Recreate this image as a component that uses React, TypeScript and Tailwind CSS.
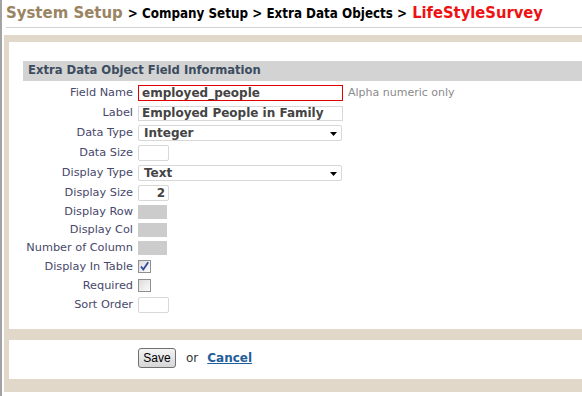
import React from "react";

const Label = ({ children }: { children: React.ReactNode }) => (
  <div className="w-[129px] shrink-0 text-right text-[11.3px] text-[#48486a] pr-[5px] leading-none whitespace-nowrap">{children}</div>
);

const Row = ({ h, label, children }: { h: string; label: string; children?: React.ReactNode }) => (
  <div className={`flex items-center ${h}`}>
    <Label>{label}</Label>
    {children}
  </div>
);

const Arrow = () => (
  <svg width="7" height="4" viewBox="0 0 7 4" className="absolute right-[4px] top-[6px]">
    <path d="M0 0H7L3.5 4Z" fill="#000" />
  </svg>
);

const Check = ({ checked }: { checked?: boolean }) => (
  <div className="w-[13px] h-[13px] border border-[#8e8f8f] bg-gradient-to-br from-[#dcdcdc] to-[#fbfbfb] relative">
    {checked && (
      <svg width="11" height="11" viewBox="0 0 11 11" className="absolute left-0 top-0">
        <path d="M2 5.5L4.3 8.5L9.2 1.2" stroke="#2e4a9e" strokeWidth="1.8" fill="none" />
      </svg>
    )}
  </div>
);

export default function App() {
  return (
    <div className="w-[582px] h-[396px] bg-white border-l-2 border-[#a3a3a3] overflow-hidden font-['DejaVu_Sans',sans-serif]">
      <div className="h-[27px] pl-[4px] pt-[5px] flex items-baseline whitespace-nowrap leading-none font-['DejaVu_Sans_Condensed','DejaVu_Sans',sans-serif] [font-stretch:condensed]">
        <span className="text-[16.6px] font-bold text-[#9a8462]">System Setup</span>
        <span className="text-[13.3px] font-bold text-black ml-[5px]">&gt; Company Setup &gt; Extra Data Objects &gt;</span>
        <span className="text-[16.4px] font-bold text-[#ee1111] ml-[5px]">LifeStyleSurvey</span>
      </div>
      <div className="h-px bg-[#d2d2d2] ml-[4px]" />
      <div className="h-[7px]" />
      <div className="ml-[2px] bg-[#e1d8c9] pt-[7px] pl-[5px] pb-[13px]">
        <div className="bg-white h-[287px] pt-[19px]">
          <div className="ml-[14px] h-[20px] bg-[#d3d3d3] flex items-center pl-[5px] text-[11.6px] font-bold text-[#3c4c60]">
            Extra Data Object Field Information
          </div>
          <div className="h-[2px]" />
          <Row h="h-[20px]" label="Field Name">
            <div className="w-[205px] h-[16px] border border-[#e00000] flex items-center pl-[3px] text-[12px] font-bold text-[#444] leading-none">employed_people</div>
            <span className="ml-[5px] text-[11px] text-[#8a8a8a]">Alpha numeric only</span>
          </Row>
          <Row h="h-[20px]" label="Label">
            <div className="w-[205px] h-[15px] border border-[#d8d8d8] flex items-center pl-[3px] text-[12px] font-bold text-[#444] leading-none whitespace-nowrap overflow-hidden">Employed People in Family</div>
          </Row>
          <Row h="h-[20px]" label="Data Type">
            <div className="relative w-[204px] h-[16px] border border-[#d8d8d8] rounded-[2px] flex items-center pl-[5px] text-[12px] font-bold text-[#444] leading-none">
              Integer
              <Arrow />
            </div>
          </Row>
          <Row h="h-[20px]" label="Data Size">
            <div className="w-[31px] h-[16px] border border-[#d8d8d8] rounded-[2px]" />
          </Row>
          <Row h="h-[20px]" label="Display Type">
            <div className="relative w-[204px] h-[16px] border border-[#d8d8d8] rounded-[2px] flex items-center pl-[5px] text-[12px] font-bold text-[#444] leading-none">
              Text
              <Arrow />
            </div>
          </Row>
          <Row h="h-[20px]" label="Display Size">
            <div className="w-[31px] h-[16px] border border-[#d8d8d8] rounded-[2px] flex items-center justify-end pr-[3px] text-[12px] font-bold text-[#444] leading-none">2</div>
          </Row>
          <Row h="h-[18px]" label="Display Row">
            <div className="w-[29px] h-[14px] bg-[#cccccc]" />
          </Row>
          <Row h="h-[18px]" label="Display Col">
            <div className="w-[29px] h-[14px] bg-[#cccccc]" />
          </Row>
          <Row h="h-[18px]" label="Number of Column">
            <div className="w-[29px] h-[14px] bg-[#cccccc]" />
          </Row>
          <Row h="h-[19px]" label="Display In Table">
            <Check checked />
          </Row>
          <Row h="h-[19px]" label="Required">
            <Check />
          </Row>
          <Row h="h-[20px]" label="Sort Order">
            <div className="w-[31px] h-[16px] border border-[#d8d8d8] rounded-[2px]" />
          </Row>
        </div>
        <div className="h-[11px]" />
        <div className="bg-white h-[39px] pl-[129px] pb-[4px] flex items-center">
          <button className="w-[38px] h-[20px] border border-[#707070] rounded-[3px] bg-gradient-to-b from-[#f4f4f4] to-[#d6d6d6] text-[12px] font-['Liberation_Sans',sans-serif] text-black leading-none">Save</button>
          <span className="ml-[10px] text-[12px] text-[#333]">or</span>
          <a href="#" className="ml-[9px] text-[12px] font-bold text-[#1f5e99] underline">Cancel</a>
        </div>
      </div>
    </div>
  );
}
